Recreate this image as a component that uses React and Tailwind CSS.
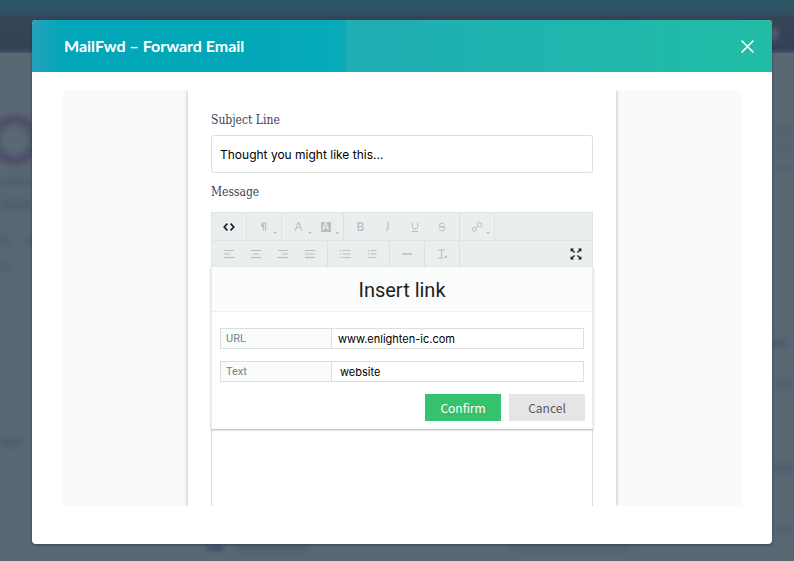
import React, { useState } from 'react';

const Lines = ({ rows }) => (
  <svg width="12" height="12" viewBox="0 0 12 12" stroke="currentColor" strokeWidth="1.2">
    {rows.map(([x1, x2], i) => (
      <path key={i} d={`M${x1} ${2.5 + i * 3.5}H${x2}`} />
    ))}
  </svg>
);

const Icon = ({ children, size = 12 }) => (
  <svg
    width={size}
    height={size}
    viewBox="0 0 12 12"
    fill="none"
    stroke="currentColor"
    strokeWidth="1"
  >
    {children}
  </svg>
);

const ToolButton = ({ label, caret, dark, children }) => (
  <button
    type="button"
    aria-label={label}
    className={`relative flex h-full w-[27px] items-center justify-center text-xs ${dark ? 'text-[#15191b]' : 'text-[#b9bebf]'}`}
  >
    {children}
    {caret && (
      <span className="absolute right-0 bottom-1.5 border-x-2 border-t-2 border-x-transparent border-t-[#b9bebf]" />
    )}
  </button>
);

const Group = ({ children }) => (
  <div className="flex h-full border-r border-[#dde1e2] pr-1 pl-[3px]">{children}</div>
);

const Toolbar = () => (
  <div className="border border-[#dfe3e4] border-b-0 bg-[#ebeeef]">
    <div className="flex h-7 border-b border-[#dfe3e4]">
      <Group>
        <ToolButton label="Code view" dark>
          <Icon>
            <path d="M4.4 2.6L1.2 6l3.2 3.4M7.6 2.6L10.8 6 7.6 9.4" strokeWidth="1.6" />
          </Icon>
        </ToolButton>
      </Group>
      <Group>
        <ToolButton label="Paragraph format" caret>
          <Icon>
            <path d="M5.6 2a2.1 2.1 0 0 0 0 4.2z" fill="currentColor" />
            <path d="M5.6 2v8M7.6 2v8M5 2h3.6" />
          </Icon>
        </ToolButton>
      </Group>
      <Group>
        <ToolButton label="Text color" caret>A</ToolButton>
        <ToolButton label="Background color" caret>
          <span className="flex h-2.5 w-2.5 items-center justify-center bg-[#b9bebf] text-[10px] font-medium text-[#ebeeef]">
            A
          </span>
        </ToolButton>
      </Group>
      <Group>
        <ToolButton label="Bold">
          <span className="font-medium">B</span>
        </ToolButton>
        <ToolButton label="Italic">
          <span className="italic">I</span>
        </ToolButton>
        <ToolButton label="Underline">
          <Icon>
            <path d="M3.4 1.5v4a2.6 2.6 0 0 0 5.2 0v-4M2.8 10.5h6.4" />
          </Icon>
        </ToolButton>
        <ToolButton label="Strikethrough">
          <Icon>
            <path d="M8.6 4C8.4 2.8 7.5 2.2 6 2.2c-1.5 0-2.5.7-2.5 1.9C3.5 6.5 8.7 5.3 8.7 7.8 8.7 9.1 7.6 9.8 6.1 9.8 4.5 9.8 3.4 9.1 3.3 7.8M2.5 6h7" />
          </Icon>
        </ToolButton>
      </Group>
      <Group>
        <ToolButton label="Insert link" caret>
          <Icon>
            <circle cx="3.2" cy="8.3" r="2" />
            <circle cx="8.4" cy="3.7" r="2.2" />
            <path d="M4.8 7L6.8 5.2" />
          </Icon>
        </ToolButton>
      </Group>
    </div>
    <div className="flex h-[26px]">
      <Group>
        <ToolButton label="Align left">
          <Lines rows={[[1, 11], [1, 7], [1, 11]]} />
        </ToolButton>
        <ToolButton label="Align center">
          <Lines rows={[[1, 11], [3, 9], [1, 11]]} />
        </ToolButton>
        <ToolButton label="Align right">
          <Lines rows={[[1, 11], [5, 11], [1, 11]]} />
        </ToolButton>
        <ToolButton label="Justify">
          <Lines rows={[[1, 11], [1, 11], [1, 11]]} />
        </ToolButton>
      </Group>
      <Group>
        <ToolButton label="Bulleted list">
          <Icon>
            <path d="M.8 2.5h1.6M.8 6h1.6M.8 9.5h1.6M3.8 2.5h7.7M3.8 6h7.7M3.8 9.5h7.7" strokeWidth="1.2" />
          </Icon>
        </ToolButton>
        <ToolButton label="Numbered list">
          <Icon>
            <path d="M4 2.5h6.5M4 6h6.5M4 9.5h6.5" strokeWidth="1.2" />
            <path d="M2.4 1.5v2M2.4 5v2M2.4 8.5v2" strokeWidth="0.8" />
          </Icon>
        </ToolButton>
      </Group>
      <Group>
        <ToolButton label="Horizontal line">
          <Icon>
            <path d="M1 6h10" strokeWidth="1.4" />
          </Icon>
        </ToolButton>
      </Group>
      <Group>
        <ToolButton label="Clear formatting">
          <Icon>
            <path d="M2 2h7M5.5 2v7.5M2 10h5.5M8.7 7.8l2.4 2.4M11.1 7.8l-2.4 2.4" />
          </Icon>
        </ToolButton>
      </Group>
      <div className="ml-auto pr-[3px]">
        <ToolButton label="Fullscreen" dark>
          <Icon>
            <path d="M1.5 1.5l3 3M10.5 1.5l-3 3M1.5 10.5l3-3M10.5 10.5l-3-3" strokeWidth="1.3" />
            <path
              d="M.6.6h3.4L.6 4zM11.4.6v3.4L8 .6zM.6 11.4V8L4 11.4zM11.4 11.4H8L11.4 8z"
              fill="currentColor"
              stroke="none"
            />
          </Icon>
        </ToolButton>
      </div>
    </div>
  </div>
);

const LinkField = ({ id, label, value, onChange, inputClass }) => (
  <div className="flex h-[21px] border border-[#dcdfe0]">
    <label
      htmlFor={id}
      className="w-[111px] shrink-0 border-r border-[#dcdfe0] bg-[#f9fcfb] pl-[5px] font-[Roboto,sans-serif] text-[11px] leading-[19px] text-[#71868b]"
    >
      {label}
    </label>
    <input
      id={id}
      name={id}
      type="text"
      value={value}
      onChange={onChange}
      className={`min-w-0 flex-1 bg-white text-[11px] leading-5 text-black outline-none ${inputClass}`}
    />
  </div>
);

// blurred page that sits behind the dialog
const Backdrop = () => (
  <div className="absolute inset-0 overflow-hidden bg-[#5a6874]" aria-hidden="true">
    <div className="h-[53px] bg-[linear-gradient(#2c5666_0px,#2d5566_11px,#364557_17px,#334154_48px,#46546a_53px)]" />
    <div className="absolute -left-2.5 top-[115px] h-[50px] w-[50px] rounded-full border-[9px] border-[#4c4d67] blur-[3px]" />
    <div className="absolute left-0 top-[178px] h-2 w-8 bg-[#505e6e] blur-[3px]" />
    <div className="absolute left-0 top-[201px] h-2 w-8 bg-[#4e5c6a] blur-[3px]" />
    <div className="absolute left-0 top-[237px] h-2 w-2 bg-[#495874] blur-[3px]" />
    <div className="absolute left-7 top-[237px] h-2 w-2 bg-[#495874] blur-[3px]" />
    <div className="absolute left-0 top-[264px] h-1.5 w-3 bg-[#4f5d6c] blur-[3px]" />
    <div className="absolute left-0 top-[439px] h-1.5 w-5 bg-[#4b5967] blur-[3px]" />
    <div className="absolute right-4 top-7 h-3 w-3 rounded-full bg-[#5a6778] blur-[3px]" />
    <div className="absolute right-0 top-[128px] h-1.5 w-5 bg-[#505e6d] blur-[3px]" />
    <div className="absolute right-0 top-[146px] h-1.5 w-5 bg-[#505e6d] blur-[3px]" />
    <div className="absolute right-0 top-[165px] h-1.5 w-5 bg-[#505e6d] blur-[3px]" />
    <div className="absolute right-2 top-[340px] h-1.5 w-4 bg-[#48576c] blur-[3px]" />
    <div className="absolute right-0 top-[381px] h-1.5 w-5 bg-[#4e5d6e] blur-[3px]" />
    <div className="absolute right-0 top-[465px] h-1.5 w-5 bg-[#4b5a6e] blur-[3px]" />
    <div className="absolute right-0 top-[526px] h-1.5 w-5 bg-[#4e5d6e] blur-[3px]" />
    <div className="absolute bottom-2.5 left-[207px] h-1.5 w-4 bg-[#415069] blur-[2px]" />
    <div className="absolute bottom-2.5 left-[236px] h-1.5 w-[72px] bg-[#4d5b69] blur-[3px]" />
    <div className="absolute bottom-2.5 left-[510px] h-1.5 w-[120px] bg-[#515f6c] blur-[3px]" />
  </div>
);

const App = () => {
  const [subject, setSubject] = useState('Thought you might like this...');
  const [link, setLink] = useState({ url: 'www.enlighten-ic.com', text: 'website' });

  const handleLink = (e) => {
    setLink({ ...link, [e.target.name]: e.target.value });
  };

  const handleSubmit = (e) => {
    e.preventDefault();
  };

  return (
    <div className="relative flex min-h-screen pt-5 pr-[22px] pb-[17px] pl-8 font-[Inter,sans-serif]">
      <Backdrop />
      <div
        role="dialog"
        aria-labelledby="dialog-title"
        className="relative flex min-w-0 flex-1 flex-col overflow-hidden rounded-sm bg-white shadow-[0_1px_3px_rgba(30,45,65,0.6)]"
      >
        <header className="flex h-[52px] shrink-0 items-center justify-between bg-[linear-gradient(90deg,#27a2bb_0%,#02a6b9_4%,#02a9b8_38%,#0aabb8_42.5%,#1fadb4_42.5%,#20bda6_100%)] pr-[18px] pl-8">
          <h1 id="dialog-title" className="font-[Lato,sans-serif] text-base font-bold text-white">
            MailFwd – Forward Email
          </h1>
          <button type="button" aria-label="Close" className="text-white">
            <svg width="13" height="13" viewBox="0 0 13 13" stroke="currentColor" strokeWidth="1.6" strokeLinecap="round">
              <path d="M1 1l11 11M12 1L1 12" />
            </svg>
          </button>
        </header>

        <div className="flex flex-1 flex-col pt-[18px] pr-[31px] pb-[38px] pl-[31px]">
          <div className="flex flex-1 justify-center overflow-hidden bg-[#fafafa]">
            <div className="flex w-full max-w-[428px] flex-col bg-white px-[23px] pt-5 shadow-[0_0_4px_rgba(0,0,0,0.3)]">
              <label
                htmlFor="subject"
                className="font-['DejaVu_Serif_Condensed','DejaVu_Serif',serif] text-xs leading-5 text-[#37435c]"
              >
                Subject Line
              </label>
              <input
                id="subject"
                type="text"
                value={subject}
                onChange={(e) => setSubject(e.target.value)}
                className="mt-[5px] h-[38px] w-full shrink-0 rounded-[3px] border border-[#dedede] bg-white px-2 text-xs text-black outline-none"
              />
              <h2 className="mt-[9px] font-['DejaVu_Serif_Condensed','DejaVu_Serif',serif] text-xs leading-5 text-[#37435c]">
                Message
              </h2>

              <div className="mt-2.5 flex flex-1 flex-col">
                <Toolbar />
                <form
                  onSubmit={handleSubmit}
                  className="z-10 border-x border-[#ebeeee] bg-white shadow-[0_1px_2px_rgba(0,0,0,0.3)]"
                >
                  <h3 className="h-[45px] border-b border-[#ebeff0] bg-[#fafdfc] text-center font-[Roboto,sans-serif] text-xl leading-[46px] text-[#222222]">
                    Insert link
                  </h3>
                  <div className="flex flex-col gap-3 px-2 pt-4">
                    <LinkField id="url" label="URL" value={link.url} onChange={handleLink} inputClass="pl-[6px]" />
                    <LinkField id="text" label="Text" value={link.text} onChange={handleLink} inputClass="pl-2" />
                  </div>
                  <div className="flex justify-end gap-2 pt-3 pr-[7px] pb-2 font-['Noto_Sans_CJK_SC','Noto_Sans',sans-serif] text-xs">
                    <button type="submit" className="h-[27px] w-[76px] bg-[#35c26d] leading-[27px] text-white">
                      Confirm
                    </button>
                    <button type="button" className="h-[27px] w-[76px] bg-[#e5e5e5] leading-[27px] text-[#55595c]">
                      Cancel
                    </button>
                  </div>
                </form>
                <textarea
                  aria-label="Message"
                  className="min-h-[60px] w-full flex-1 resize-none border-x border-[#dedede] bg-white p-2 text-xs outline-none"
                />
              </div>
            </div>
          </div>
        </div>
      </div>
    </div>
  );
};

export default App;
